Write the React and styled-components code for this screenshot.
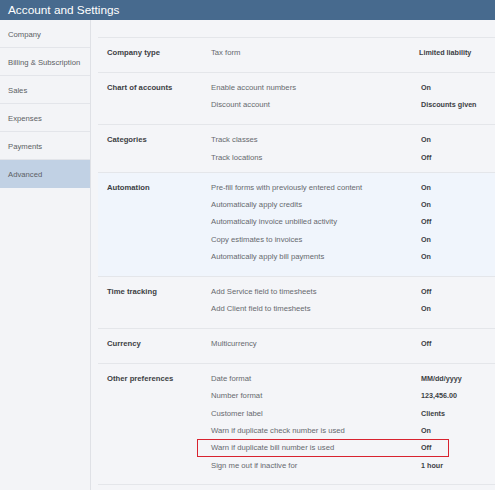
import React from "react";
import styled, { createGlobalStyle, css } from "styled-components";

const GlobalStyle = createGlobalStyle`
  html, body {
    margin: 0;
    padding: 0;
    background: #f4f5f8;
    font-family: "Liberation Sans", Arial, sans-serif;
  }
`;

const Page = styled.div`
  width: 495px;
  height: 490px;
  display: flex;
  flex-direction: column;
  overflow: hidden;
`;

const Header = styled.header`
  height: 20px;
  background-color: #476a8e;
  color: #fff;
  font-size: 11.8px;
  line-height: 20px;
  padding-left: 8px;
  flex-shrink: 0;
`;

const Body = styled.div`
  flex: 1;
  display: flex;
`;

const Sidebar = styled.nav`
  width: 90px;
  flex-shrink: 0;
  border-right: 1px solid #dfe1e6;
  background-color: #f3f4f7;
`;

const NavItem = styled.div`
  height: 25px;
  line-height: 25px;
  padding: 2px 0 0 8px;
  font-size: 7.7px;
  color: #5c5f64;
  border-bottom: 1px solid #e3e5ea;
  background-color: ${(props) => (props.active ? "#c1d1e4" : "transparent")};
  ${(props) =>
    props.active &&
    css`
      border-bottom-color: #c1d1e4;
    `}
`;

const Main = styled.main`
  flex: 1;
  padding: 17px 0 0 7px;
`;

const Section = styled.section`
  display: grid;
  grid-template-columns: 104px 1fr;
  padding: 6px 0 ${(props) => (props.tight ? "5.7px" : "10.7px")} 9px;
  border-top: 1.5px solid #e4e6ea;
  background-color: ${(props) => (props.highlight ? "#f0f5fc" : "transparent")};
  &:last-child {
    border-bottom: 1.5px solid #e4e6ea;
  }
`;

const SectionTitle = styled.div`
  font-size: 7.7px;
  font-weight: bold;
  color: #3c3f44;
  line-height: 17px;
`;

const Rows = styled.div`
  display: flex;
  flex-direction: column;
`;

const Row = styled.div`
  position: relative;
  display: grid;
  grid-template-columns: 210px 1fr;
  height: 17.3px;
  align-items: center;
  ${(props) =>
    props.marked &&
    css`
      &::after {
        content: "";
        position: absolute;
        left: -14px;
        top: 0;
        width: 252px;
        height: 18px;
        border: 1.5px solid #d8232f;
        box-sizing: border-box;
      }
    `}
`;

const Setting = styled.span`
  font-size: 7.7px;
  color: #66696e;
`;

const Value = styled.span`
  font-size: 7.2px;
  font-weight: bold;
  color: #3c3f44;
  margin-left: ${(props) => (props.shift ? "-2px" : "0")};
`;

const navItems = ["Company", "Billing & Subscription", "Sales", "Expenses", "Payments", "Advanced"];

const sections = [
  { title: "Company type", rows: [["Tax form", "Limited liability", true]] },
  {
    title: "Chart of accounts",
    rows: [
      ["Enable account numbers", "On"],
      ["Discount account", "Discounts given"],
    ],
  },
  {
    title: "Categories",
    tight: true,
    rows: [
      ["Track classes", "On"],
      ["Track locations", "Off"],
    ],
  },
  {
    title: "Automation",
    highlight: true,
    rows: [
      ["Pre-fill forms with previously entered content", "On"],
      ["Automatically apply credits", "On"],
      ["Automatically invoice unbilled activity", "Off"],
      ["Copy estimates to invoices", "On"],
      ["Automatically apply bill payments", "On"],
    ],
  },
  {
    title: "Time tracking",
    rows: [
      ["Add Service field to timesheets", "Off"],
      ["Add Client field to timesheets", "On"],
    ],
  },
  { title: "Currency", rows: [["Multicurrency", "Off"]] },
  {
    title: "Other preferences",
    rows: [
      ["Date format", "MM/dd/yyyy"],
      ["Number format", "123,456.00"],
      ["Customer label", "Clients"],
      ["Warn if duplicate check number is used", "On"],
      ["Warn if duplicate bill number is used", "Off", false, true],
      ["Sign me out if inactive for", "1 hour"],
    ],
  },
];

const App = () => {
  return (
    <Page>
      <GlobalStyle />
      <Header>Account and Settings</Header>
      <Body>
        <Sidebar>
          {navItems.map((item) => (
            <NavItem key={item} active={item === "Advanced"}>
              {item}
            </NavItem>
          ))}
        </Sidebar>
        <Main>
          {sections.map((section) => (
            <Section key={section.title} highlight={section.highlight} tight={section.tight}>
              <SectionTitle>{section.title}</SectionTitle>
              <Rows>
                {section.rows.map(([label, value, shift, marked]) => (
                  <Row key={label} marked={marked}>
                    <Setting>{label}</Setting>
                    <Value shift={shift}>{value}</Value>
                  </Row>
                ))}
              </Rows>
            </Section>
          ))}
        </Main>
      </Body>
    </Page>
  );
};

export default App;
